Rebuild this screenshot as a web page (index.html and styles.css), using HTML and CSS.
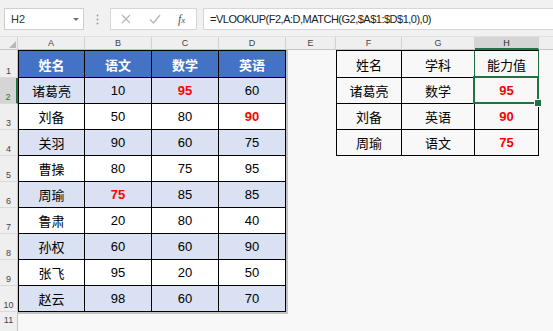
FILE: index.html
```html
<!DOCTYPE html>
<html lang="zh">
<head>
    <meta charset="UTF-8">
    <title>VLOOKUP MATCH</title>
    <link rel="stylesheet" href="styles.css">
</head>
<body>

    <div class="toolbar">
        <div class="namebox"><span>H2</span><span class="caret"></span></div>
        <div class="grip">
            <svg width="3" height="11" viewBox="0 0 3 11"><circle cx="1.5" cy="1.5" r="0.9" fill="#999"/><circle cx="1.5" cy="5.5" r="0.9" fill="#999"/><circle cx="1.5" cy="9.5" r="0.9" fill="#999"/></svg>
        </div>
        <div class="fxbtns">
            <svg class="cancel" width="10" height="10" viewBox="0 0 10 10"><path d="M1 1L9 9M9 1L1 9" stroke="#b5b5b5" stroke-width="1.1" fill="none"/></svg>
            <svg class="enter" width="12" height="10" viewBox="0 0 12 10"><path d="M1 5.5L4.5 9L11 1" stroke="#b5b5b5" stroke-width="1.3" fill="none"/></svg>
            <span class="fx"><i>f</i><i class="x">x</i></span>
        </div>
        <div class="formula">=VLOOKUP(F2,A:D,MATCH(G2,$A$1:$D$1,0),0)</div>
    </div>

    <div class="sheet">
        <div class="row colhead">
            <div class="corner"><span class="tri"></span></div>
            <div class="ch">A</div><div class="ch">B</div><div class="ch">C</div><div class="ch">D</div>
            <div class="ch">E</div><div class="ch">F</div><div class="ch">G</div><div class="ch on">H</div><div class="ch end"></div>
        </div>

        <div class="row r1">
            <div class="rh">1</div>
            <div class="c t a hd">姓名</div><div class="c t hd">语文</div><div class="c t hd">数学</div><div class="c t hd">英语</div>
            <div class="c sh"></div>
            <div class="c u a">姓名</div><div class="c u gl">学科</div><div class="c u hg">能力值</div><div class="c"></div>
        </div>
        <div class="row">
            <div class="rh on">2</div>
            <div class="c t a alt">诸葛亮</div><div class="c t alt">10</div><div class="c t alt red">95</div><div class="c t alt">60</div>
            <div class="c sh"></div>
            <div class="c u a">诸葛亮</div><div class="c u">数学</div><div class="c u red sel">95</div><div class="c"></div>
        </div>
        <div class="row">
            <div class="rh">3</div>
            <div class="c t a w">刘备</div><div class="c t w">50</div><div class="c t w">80</div><div class="c t w red">90</div>
            <div class="c sh"></div>
            <div class="c u a">刘备</div><div class="c u">英语</div><div class="c u red">90</div><div class="c"></div>
        </div>
        <div class="row">
            <div class="rh">4</div>
            <div class="c t a alt">关羽</div><div class="c t alt">90</div><div class="c t alt">60</div><div class="c t alt">75</div>
            <div class="c sh"></div>
            <div class="c u a">周瑜</div><div class="c u">语文</div><div class="c u red">75</div><div class="c"></div>
        </div>
        <div class="row">
            <div class="rh">5</div>
            <div class="c t a w">曹操</div><div class="c t w">80</div><div class="c t w">75</div><div class="c t w">95</div>
            <div class="c sh"></div>
            <div class="c"></div><div class="c"></div><div class="c"></div><div class="c"></div>
        </div>
        <div class="row">
            <div class="rh">6</div>
            <div class="c t a alt">周瑜</div><div class="c t alt red">75</div><div class="c t alt">85</div><div class="c t alt">85</div>
            <div class="c sh"></div>
            <div class="c"></div><div class="c"></div><div class="c"></div><div class="c"></div>
        </div>
        <div class="row">
            <div class="rh">7</div>
            <div class="c t a w">鲁肃</div><div class="c t w">20</div><div class="c t w">80</div><div class="c t w">40</div>
            <div class="c sh"></div>
            <div class="c"></div><div class="c"></div><div class="c"></div><div class="c"></div>
        </div>
        <div class="row">
            <div class="rh">8</div>
            <div class="c t a alt">孙权</div><div class="c t alt">60</div><div class="c t alt">60</div><div class="c t alt">90</div>
            <div class="c sh"></div>
            <div class="c"></div><div class="c"></div><div class="c"></div><div class="c"></div>
        </div>
        <div class="row">
            <div class="rh">9</div>
            <div class="c t a w">张飞</div><div class="c t w">95</div><div class="c t w">20</div><div class="c t w">50</div>
            <div class="c sh"></div>
            <div class="c"></div><div class="c"></div><div class="c"></div><div class="c"></div>
        </div>
        <div class="row">
            <div class="rh">10</div>
            <div class="c t a alt">赵云</div><div class="c t alt">98</div><div class="c t alt">60</div><div class="c t alt">70</div>
            <div class="c sh"></div>
            <div class="c"></div><div class="c"></div><div class="c"></div><div class="c"></div>
        </div>
        <div class="row r11">
            <div class="rh">11</div>
            <div class="c shb"></div><div class="c shb"></div><div class="c shb"></div><div class="c shb"></div>
            <div class="c shc"></div>
            <div class="c"></div><div class="c"></div><div class="c"></div><div class="c"></div>
        </div>
    </div>

</body>
</html>
```

FILE: styles.css
```css
* {
    box-sizing: border-box;
}

body {
    margin: 0;
    background-color: #f8f8f8;
    font-family: "Liberation Sans", "Noto Sans CJK SC", sans-serif;
    color: #000;
    overflow: hidden;
}

/* formula bar */
.toolbar {
    height: 37px;
    display: flex;
    align-items: flex-start;
    padding: 8px 0 0 4px;
    background-color: #f1f1f1;
    border-bottom: 1px solid #e0e0e0;
}

.namebox {
    width: 80px;
    height: 22px;
    display: flex;
    align-items: center;
    justify-content: space-between;
    padding: 0 4px 0 6px;
    background-color: #fff;
    border: 1px solid #cfcfcf;
    font-size: 11px;
    color: #333;
}

.caret {
    width: 0;
    height: 0;
    border-left: 3px solid transparent;
    border-right: 3px solid transparent;
    border-top: 3px solid #707070;
}

.grip {
    width: 26px;
    height: 22px;
    display: flex;
    align-items: center;
    justify-content: center;
}

.fxbtns {
    width: 87px;
    height: 22px;
    display: flex;
    align-items: center;
    padding-left: 10px;
    background-color: #fff;
    border: 1px solid #d6d6d6;
}

.fxbtns .enter {
    margin-left: 18px;
}

.fx {
    margin-left: 17px;
    font-family: "Liberation Serif", serif;
    font-size: 12px;
    color: #555;
}

.fx .x {
    font-size: 9px;
}

.formula {
    flex: 1;
    height: 22px;
    margin-left: 6px;
    display: flex;
    align-items: center;
    padding-left: 6px;
    background-color: #fff;
    border: 1px solid #d6d6d6;
    border-right: none;
    font-size: 11px;
    letter-spacing: -0.5px;
    color: #222;
    white-space: nowrap;
}

/* grid */
.row {
    display: grid;
    grid-template-columns: 18px 67px 67px 67px 67px 50px 66px 73px 64px 1fr;
    height: 26px;
}

.colhead {
    height: 13px;
}

.r1 {
    height: 28px;
}

.r11 {
    height: 20px;
}

.corner,
.ch {
    background-color: #efefef;
    border-right: 1px solid #d2d2d2;
    border-bottom: 1px solid #c4c4c4;
}

.corner {
    position: relative;
}

.tri {
    position: absolute;
    right: 1px;
    bottom: 1px;
    width: 0;
    height: 0;
    border-left: 7px solid transparent;
    border-bottom: 7px solid #b7b7b7;
}

.ch {
    display: flex;
    align-items: center;
    justify-content: center;
    font-size: 9px;
    color: #444;
}

.ch.on {
    background-color: #d5d5d5;
    border-bottom: 2px solid #217346;
    color: #2b2b2b;
}

.ch.end {
    border-right: none;
}

.rh {
    display: flex;
    align-items: flex-end;
    justify-content: center;
    padding-bottom: 1px;
    background-color: #efefef;
    border-right: 1px solid #c4c4c4;
    border-bottom: 1px solid #dadada;
    font-size: 9px;
    color: #444;
}

.rh.on {
    background-color: #d5d5d5;
    border-right: 2px solid #217346;
    color: #217346;
}

.r11 .rh {
    align-items: flex-start;
    padding-top: 3px;
    border-bottom: none;
}

.c {
    display: flex;
    align-items: center;
    justify-content: center;
    font-size: 13px;
}

/* table A:D */
.t {
    border-right: 1px solid #000;
    border-bottom: 1px solid #000;
}

.r1 .t,
.r1 .u {
    border-top: 1px solid #000;
}

.t.a,
.u.a {
    border-left: 1px solid #000;
}

.hd {
    background-color: #4472c4;
    color: #fff;
    font-weight: bold;
}

.alt {
    background-color: #d9e1f2;
}

.w {
    background-color: #fff;
}

.red {
    color: #ff0000;
    font-weight: bold;
}

.sh {
    box-shadow: inset 2px 0 0 #c2c2c2;
}

.shb {
    box-shadow: inset 0 2px 0 #c2c2c2;
}

.shc {
    background: linear-gradient(#c2c2c2, #c2c2c2) no-repeat 0 0 / 2px 2px;
}

/* table F:H */
.u {
    border-right: 1px solid #000;
    border-bottom: 1px solid #000;
}

.u.gl {
    border-right-color: #1f6a40;
}

.u.hg {
    border-right-color: #1f6a40;
}

.sel {
    position: relative;
}

.sel::after {
    content: "";
    position: absolute;
    top: -2px;
    left: -2px;
    right: -1px;
    bottom: -1px;
    border: 2px solid #217346;
}

.sel::before {
    content: "";
    position: absolute;
    right: -4px;
    bottom: -4px;
    width: 6px;
    height: 6px;
    background-color: #217346;
    border: 1px solid #fff;
    z-index: 1;
}
```
